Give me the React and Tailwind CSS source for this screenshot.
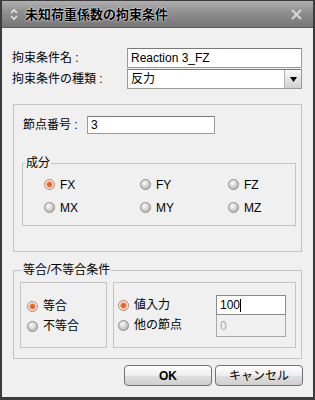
import React from 'react';

function Radio({ checked, label }) {
    return (
        <div className="flex items-center h-full">
            <span
                className={
                    checked
                        ? "w-[11px] h-[11px] shrink-0 rounded-full border border-[#a08878] bg-[radial-gradient(circle,#ee5318_0,#f26a2c_2px,#fbd0bb_3.5px,#ffffff_4.5px)]"
                        : "w-[11px] h-[11px] shrink-0 rounded-full border border-[#8c8c8c] bg-[radial-gradient(circle_at_40%_35%,#ffffff_0,#d8d8d8_40%,#a2a2a2_100%)]"
                }
            />
            <span className="ml-[5px]">{label}</span>
        </div>
    );
}

function TextBox({ value, className }) {
    return (
        <div className={"flex items-center bg-white border border-[#9a9a9a] border-t-[#7a7a7a] pl-[3px] " + className}>
            {value}
        </div>
    );
}

export default function App() {
    return (
        <div className="w-[315px] h-[400px] flex flex-col bg-[#f0f0f0] border-x-2 border-t border-b-[3px] border-[#3c3c3c] text-[12px] text-black font-['Liberation_Sans','Noto_Sans_CJK_JP',sans-serif]">
            {/* title bar */}
            <div className="h-[27px] shrink-0 flex items-center bg-[linear-gradient(#b0b0b0,#8e8e8e_45%,#767676)] border-b border-[#5c5c5c]">
                <svg width="8" height="13" viewBox="0 0 8 13" className="ml-[8px]">
                    <path d="M1 5 L4 2 L7 5" fill="none" stroke="#e4e4e4" strokeWidth="1.6" />
                    <path d="M1 8 L4 11 L7 8" fill="none" stroke="#e4e4e4" strokeWidth="1.6" />
                </svg>
                <span className="ml-[7px] text-[13px] font-bold font-['Noto_Sans_CJK_JP',sans-serif] [text-shadow:0_0_2px_#fff,0_0_1px_#fff]">
                    未知荷重係数の拘束条件
                </span>
                <svg width="13" height="11" viewBox="0 0 13 11" className="ml-auto mr-[10px]">
                    <path d="M2 1 L11 10 M11 1 L2 10" stroke="#d6d6d6" strokeWidth="2.2" />
                </svg>
            </div>

            {/* body */}
            <div className="flex-1 flex flex-col px-[10px]">
                <div className="mt-[20px] flex items-center h-[20px]">
                    <span className="w-[115px]">拘束条件名 :</span>
                    <TextBox value="Reaction 3_FZ" className="w-[175px] h-[20px]" />
                </div>
                <div className="mt-[1px] flex items-center h-[20px]">
                    <span className="w-[115px]">拘束条件の種類 :</span>
                    <div className="w-[175px] h-[20px] flex bg-white border border-[#9a9a9a] border-t-[#7a7a7a]">
                        <span className="flex-1 flex items-center pl-[3px]">反力</span>
                        <div className="w-[17px] flex items-center justify-center border-l border-[#b4b4b4] rounded-tr-[3px] bg-[linear-gradient(#fafafa,#e2e2e2_55%,#d0d0d0)]">
                            <svg width="7" height="5" viewBox="0 0 7 5">
                                <path d="M0 0 H7 L3.5 5 Z" fill="#000" />
                            </svg>
                        </div>
                    </div>
                </div>

                {/* node group */}
                <div className="mt-[15px] mx-[1px] h-[148px] shrink-0 border border-[#c4c4c4] pl-[8px] pr-[5px] pt-[11px]">
                    <div className="flex items-center h-[18px] pl-[1px]">
                        <span className="w-[64px]">節点番号 :</span>
                        <TextBox value="3" className="w-[128px] h-[18px]" />
                    </div>
                    <fieldset className="mt-[22px] border border-[#c4c4c4] pt-[3px] pb-[6px]">
                        <legend className="ml-[2px] px-[1px] leading-[14px]">成分</legend>
                        <div className="grid grid-cols-[96px_88px_auto] pl-[21px]">
                            <div className="h-[23px]"><Radio checked label="FX" /></div>
                            <div className="h-[23px]"><Radio label="FY" /></div>
                            <div className="h-[23px]"><Radio label="FZ" /></div>
                            <div className="h-[23px]"><Radio label="MX" /></div>
                            <div className="h-[23px]"><Radio label="MY" /></div>
                            <div className="h-[23px]"><Radio label="MZ" /></div>
                        </div>
                    </fieldset>
                </div>

                {/* equality group */}
                <fieldset className="mt-[11px] mx-[1px] border border-[#c4c4c4] pt-[5px] pb-[10px] pl-[6px]">
                    <legend className="ml-[2px] px-[1px] leading-[14px]">等合/不等合条件</legend>
                    <div className="flex gap-[6px]">
                        <div className="w-[87px] h-[66px] border border-[#c4c4c4] pt-[13px] pl-[6px]">
                            <div className="h-[20px]"><Radio checked label="等合" /></div>
                            <div className="h-[20px]"><Radio label="不等合" /></div>
                        </div>
                        <div className="w-[183px] h-[66px] border border-[#c4c4c4] pt-[12px] pl-[4px] flex">
                            <div className="w-[98px]">
                                <div className="h-[20px]"><Radio checked label="値入力" /></div>
                                <div className="h-[20px]"><Radio label="他の節点" /></div>
                            </div>
                            <div className="w-[70px] flex flex-col">
                                <div className="h-[20px] flex items-center bg-white border border-[#8a8a8a] pl-[3px]">
                                    100<span className="w-[1px] h-[13px] bg-black" />
                                </div>
                                <div className="h-[22px] flex items-center bg-[#f0f0f0] border border-t-0 border-[#a8a8a8] pl-[3px] text-[#a8a8a8]">
                                    0
                                </div>
                            </div>
                        </div>
                    </div>
                </fieldset>

                <div className="mt-[6px] flex justify-end gap-[3px]">
                    <button className="w-[88px] h-[21px] rounded-[4px] border border-[#707070] bg-[linear-gradient(#ffffff,#eeeeee_50%,#dedede_52%,#d0d0d0)] font-bold">
                        OK
                    </button>
                    <button className="w-[88px] h-[21px] rounded-[4px] border border-[#707070] bg-[linear-gradient(#ffffff,#eeeeee_50%,#dedede_52%,#d0d0d0)]">
                        キャンセル
                    </button>
                </div>
            </div>
        </div>
    );
}
